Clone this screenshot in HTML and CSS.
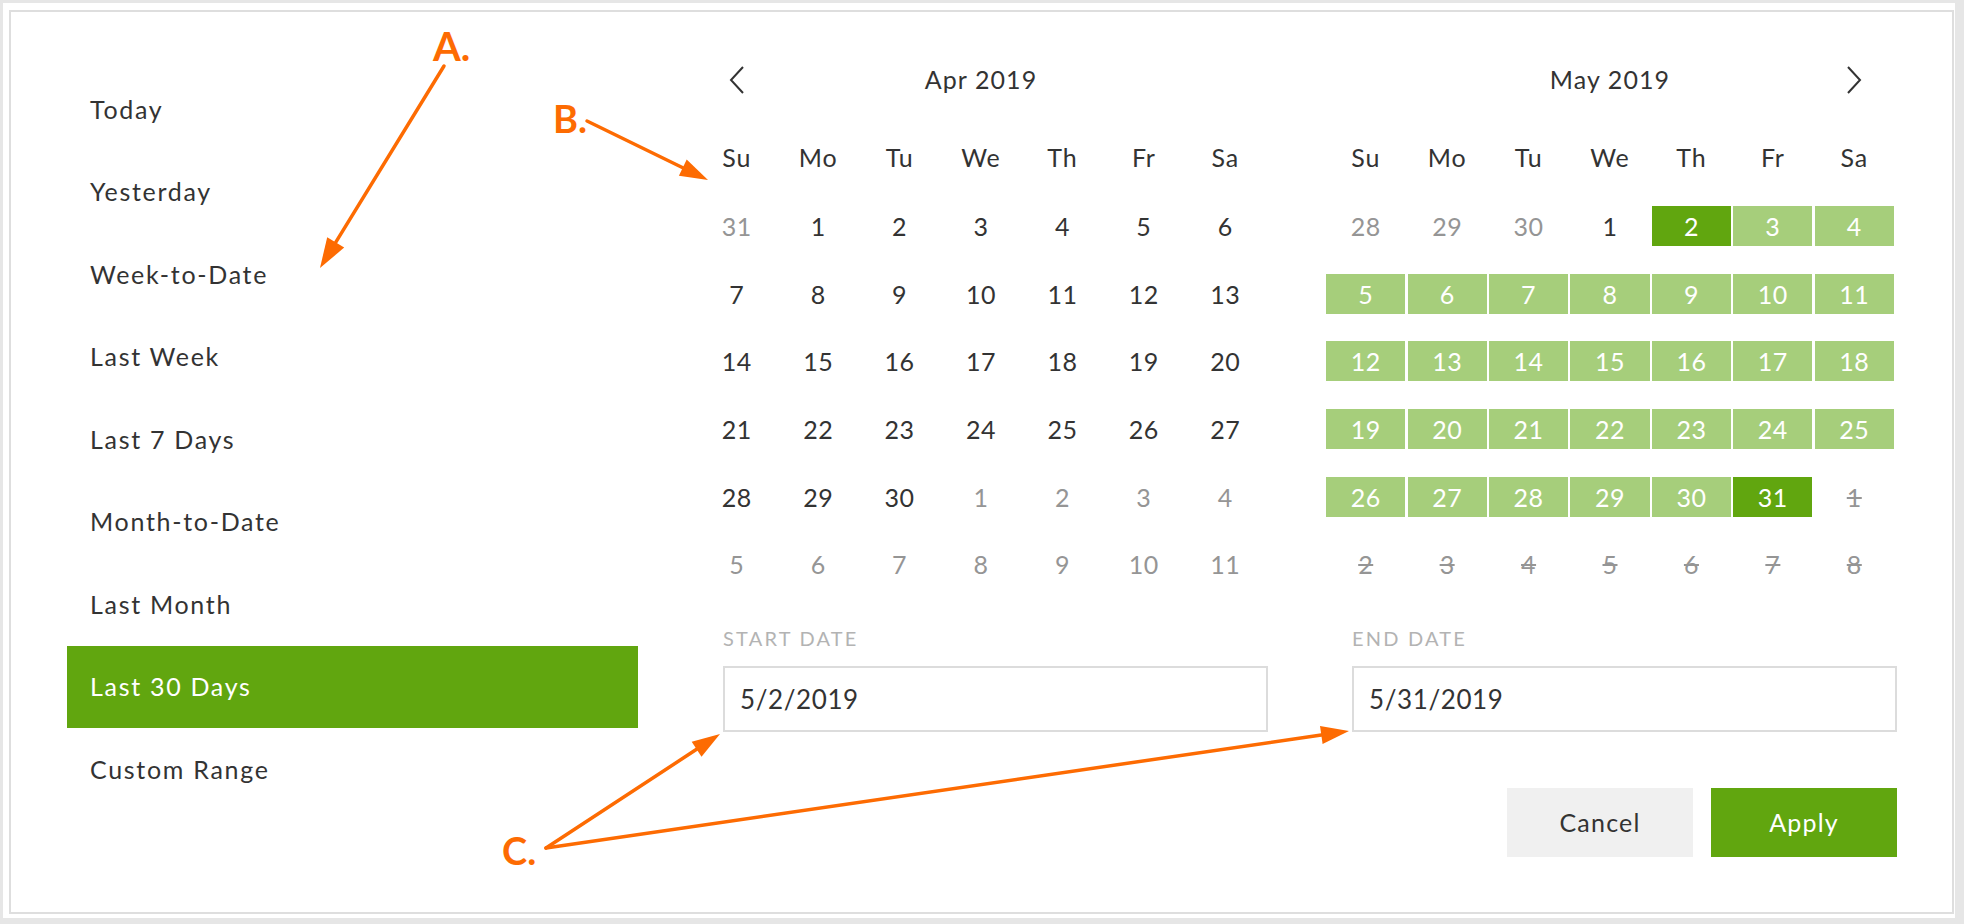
FILE: index.html
```html
<!DOCTYPE html>
<html>
<head>
<meta charset="utf-8">
<link rel="stylesheet" href="styles.css">
</head>
<body>
<div class="frame">
  <div class="panel">
    <ul class="menu">
      <li>Today</li>
      <li>Yesterday</li>
      <li>Week-to-Date</li>
      <li>Last Week</li>
      <li>Last 7 Days</li>
      <li>Month-to-Date</li>
      <li>Last Month</li>
      <li class="active">Last 30 Days</li>
      <li>Custom Range</li>
    </ul>
    <div class="main">
      <div class="cal">
        <div class="cal-head">
          <span class="nav"><svg width="16" height="30" viewBox="0 0 16 30"><polyline points="14,2 2,15 14,28" fill="none" stroke="#333" stroke-width="2"/></svg></span>
          <span class="title">Apr 2019</span>
          <span class="nav"></span>
        </div>
        <div class="weekdays"><span>Su</span><span>Mo</span><span>Tu</span><span>We</span><span>Th</span><span>Fr</span><span>Sa</span></div>
        <div class="days">
          <span class="day off">31</span><span class="day">1</span><span class="day">2</span><span class="day">3</span><span class="day">4</span><span class="day">5</span><span class="day">6</span>
          <span class="day">7</span><span class="day">8</span><span class="day">9</span><span class="day">10</span><span class="day">11</span><span class="day">12</span><span class="day">13</span>
          <span class="day">14</span><span class="day">15</span><span class="day">16</span><span class="day">17</span><span class="day">18</span><span class="day">19</span><span class="day">20</span>
          <span class="day">21</span><span class="day">22</span><span class="day">23</span><span class="day">24</span><span class="day">25</span><span class="day">26</span><span class="day">27</span>
          <span class="day">28</span><span class="day">29</span><span class="day">30</span><span class="day off">1</span><span class="day off">2</span><span class="day off">3</span><span class="day off">4</span>
          <span class="day off">5</span><span class="day off">6</span><span class="day off">7</span><span class="day off">8</span><span class="day off">9</span><span class="day off">10</span><span class="day off">11</span>
        </div>
        <div class="field">
          <div class="label">START DATE</div>
          <div class="box">5/2/2019</div>
        </div>
      </div>
      <div class="cal">
        <div class="cal-head">
          <span class="nav"></span>
          <span class="title">May 2019</span>
          <span class="nav"><svg width="16" height="30" viewBox="0 0 16 30"><polyline points="2,2 14,15 2,28" fill="none" stroke="#333" stroke-width="2"/></svg></span>
        </div>
        <div class="weekdays"><span>Su</span><span>Mo</span><span>Tu</span><span>We</span><span>Th</span><span>Fr</span><span>Sa</span></div>
        <div class="days">
          <span class="day off">28</span><span class="day off">29</span><span class="day off">30</span><span class="day">1</span><span class="day sel">2</span><span class="day rng">3</span><span class="day rng">4</span>
          <span class="day rng">5</span><span class="day rng">6</span><span class="day rng">7</span><span class="day rng">8</span><span class="day rng">9</span><span class="day rng">10</span><span class="day rng">11</span>
          <span class="day rng">12</span><span class="day rng">13</span><span class="day rng">14</span><span class="day rng">15</span><span class="day rng">16</span><span class="day rng">17</span><span class="day rng">18</span>
          <span class="day rng">19</span><span class="day rng">20</span><span class="day rng">21</span><span class="day rng">22</span><span class="day rng">23</span><span class="day rng">24</span><span class="day rng">25</span>
          <span class="day rng">26</span><span class="day rng">27</span><span class="day rng">28</span><span class="day rng">29</span><span class="day rng">30</span><span class="day sel">31</span><span class="day dis">1</span>
          <span class="day dis">2</span><span class="day dis">3</span><span class="day dis">4</span><span class="day dis">5</span><span class="day dis">6</span><span class="day dis">7</span><span class="day dis">8</span>
        </div>
        <div class="field">
          <div class="label">END DATE</div>
          <div class="box">5/31/2019</div>
        </div>
        <div class="actions">
          <button class="btn cancel">Cancel</button>
          <button class="btn apply">Apply</button>
        </div>
      </div>
    </div>
  </div>
</div>

<svg class="annot" width="1964" height="924" viewBox="0 0 1964 924">
  <g stroke="#fd6b02" stroke-width="3.5" fill="none" stroke-linecap="round">
    <line x1="444" y1="66" x2="335.7" y2="242.4"/>
    <line x1="587" y1="121" x2="682.8" y2="167.7"/>
    <line x1="546" y1="848" x2="696.6" y2="749.3"/>
    <line x1="546" y1="848" x2="1321.3" y2="735"/>
  </g>
  <g fill="#fd6b02">
    <polygon points="320,268 344.2,247.6 327.2,237.2"/>
    <polygon points="708,180 678.9,175.8 686.7,159.6"/>
    <polygon points="720,734 701.5,756.8 691.7,741.8"/>
    <polygon points="1349,731 1322.6,743.9 1320,726.1"/>
  </g>
</svg>
<span class="tag tag-a">A.</span>
<span class="tag tag-b">B.</span>
<span class="tag tag-c">C.</span>
</body>
</html>
```
FILE: styles.css
```css
html, body {
  margin: 0;
  padding: 0;
}
body {
  width: 1964px;
  height: 924px;
  overflow: hidden;
  background: #e6e6e6;
  font-family: Lato, "Liberation Sans", sans-serif;
  color: #333;
  position: relative;
}
.frame {
  box-sizing: border-box;
  margin: 3px 9px 0 3px;
  height: 915px;
  background: #fff;
  padding: 7px 1px 4px 6px;
}
.panel {
  box-sizing: border-box;
  height: 100%;
  border: 2px solid #dedede;
  display: flex;
  align-items: flex-start;
}
.menu {
  list-style: none;
  margin: 56px 0 0 56px;
  padding: 0;
  width: 571px;
}
.menu li {
  box-sizing: border-box;
  height: 82.5px;
  display: flex;
  align-items: center;
  padding-left: 23px;
  padding-bottom: 1px;
  font-size: 25px;
  letter-spacing: 1.7px;
  color: #333;
}
.menu li.active {
  background: #61a60f;
  color: #fff;
}
.main {
  margin-left: 58px;
  padding-top: 40px;
  display: grid;
  grid-template-columns: 570px 570px;
  column-gap: 59px;
}
.cal-head {
  height: 56px;
  display: grid;
  grid-template-columns: 81.4px 1fr 81.4px;
  align-items: center;
}
.nav {
  display: flex;
  justify-content: center;
  align-items: center;
}
.nav svg { display: block; }
.title {
  text-align: center;
  font-size: 25px;
  letter-spacing: 1.1px;
  padding-bottom: 2px;
}
.weekdays {
  margin-top: 16.3px;
  height: 67.7px;
  display: grid;
  grid-template-columns: repeat(7, 1fr);
  align-items: center;
  font-size: 25px;
  letter-spacing: 0.8px;
}
.weekdays span { text-align: center; padding-bottom: 2px; }
.days {
  display: grid;
  grid-template-columns: repeat(7, 1fr);
  grid-auto-rows: 67.7px;
  align-items: center;
}
.day {
  height: 40px;
  margin: 0 1.2px;
  display: flex;
  align-items: center;
  justify-content: center;
  font-size: 25px;
  letter-spacing: 0.5px;
  color: #333;
}
.day.off { color: #959595; }
.day.dis { color: #959595; text-decoration: line-through; }
.day.rng { background: #a6ce7b; color: #fff; }
.day.sel { background: #61a60f; color: #fff; }
.field {
  margin: 27.5px 0 0 27px;
  width: 545px;
}
.label {
  height: 24px;
  line-height: 24px;
  font-size: 20px;
  letter-spacing: 2.2px;
  color: #b3b3b3;
}
.box {
  box-sizing: border-box;
  margin-top: 16px;
  height: 66px;
  border: 2px solid #dcdcdc;
  padding-left: 15px;
  display: flex;
  align-items: center;
  font-size: 26px;
  letter-spacing: 0.6px;
  color: #333;
}
.actions {
  margin: 56px 0 0 27px;
  width: 545px;
  display: flex;
  justify-content: flex-end;
  gap: 18px;
}
.btn {
  width: 186px;
  height: 69px;
  border: none;
  font-family: Lato, "Liberation Sans", sans-serif;
  font-size: 25px;
  letter-spacing: 1.2px;
  padding: 0;
}
.btn.cancel { background: #f0f0f0; color: #333; }
.btn.apply { background: #61a60f; color: #fff; }
.annot {
  position: absolute;
  left: 0;
  top: 0;
  pointer-events: none;
}
.tag {
  position: absolute;
  font-family: Lato, "Liberation Sans", sans-serif;
  font-weight: 700;
  color: #fd6b02;
  line-height: 1;
}
.tag-a { left: 433px; top: 26px; font-size: 40px; }
.tag-b { left: 553px; top: 99px; font-size: 38px; }
.tag-c { left: 502px; top: 831px; font-size: 38px; }
```
